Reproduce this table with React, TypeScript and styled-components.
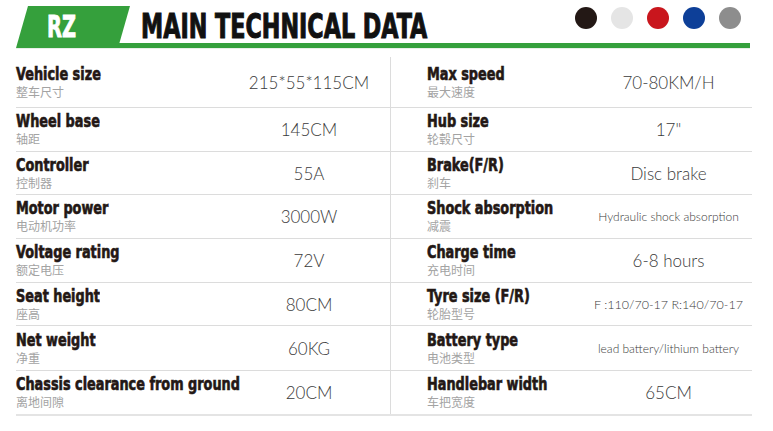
import React, { FC } from 'react';
import styled, { createGlobalStyle } from 'styled-components';

const GREEN = '#35a03c';
const INK = '#231815';
const LINE = '#dcdcdc';

const GlobalStyle = createGlobalStyle`
  html, body {
    margin: 0;
    padding: 0;
    background: #ffffff;
  }
  body {
    font-family: 'Lato', 'Noto Sans CJK SC', sans-serif;
  }
`;

const Page = styled.div`
  width: 773px;
  height: 431px;
  overflow: hidden;
  padding: 6px 21px 0 16px;
  box-sizing: border-box;
`;

const Header = styled.div`
  display: flex;
  align-items: stretch;
  height: 42px;
  margin-right: 2px;
  border-bottom: 1px solid #e8efe8;
`;

const Badge = styled.div`
  flex: 0 0 114px;
  background: ${GREEN};
  clip-path: polygon(12px 0, 100% 0, calc(100% - 12px) 100%, 0 100%);
  display: flex;
  align-items: center;
  padding-left: 31px;
  box-sizing: border-box;
`;

const Condensed = styled.span<{ $size: number; $scale: number; $color: string; $stroke?: number }>`
  display: inline-block;
  font-family: 'DejaVu Sans Condensed', 'DejaVu Sans', sans-serif;
  font-weight: 700;
  font-size: ${(p) => p.$size}px;
  line-height: 1;
  color: ${(p) => p.$color};
  white-space: nowrap;
  transform: scaleX(${(p) => p.$scale});
  transform-origin: left center;
  -webkit-text-stroke: ${(p) => p.$stroke ?? 0.6}px ${(p) => p.$color};
`;

const HeadMain = styled.div`
  flex: 1;
  margin-left: -12px;
  display: flex;
  flex-direction: column;
`;

const TitleRow = styled.div`
  flex: 1;
  display: flex;
  align-items: center;
  justify-content: space-between;
  padding: 0 9px 0 23px;
`;

const Title = styled.div`
  padding-top: 4px;
`;

const Swatches = styled.div`
  display: flex;
  gap: 14px;
  align-self: flex-start;
  margin-top: 1px;
`;

const Swatch = styled.span<{ $color: string }>`
  width: 22px;
  height: 22px;
  border-radius: 50%;
  background: ${(p) => p.$color};
`;

const Bar = styled.div`
  height: 6px;
  background: ${GREEN};
`;

const Table = styled.div`
  margin-top: 8px;
  border-bottom: 2px solid #e4e4e4;
  width: 736px;
`;

const Row = styled.div<{ $h: number }>`
  display: grid;
  grid-template-columns: 212px 163px 194px 167px;
  height: ${(p) => p.$h}px;
  box-sizing: border-box;
  border-bottom: 1px solid ${LINE};

  &:last-child {
    border-bottom: none;
  }
`;

const LabelCell = styled.div<{ $inset?: boolean }>`
  display: flex;
  flex-direction: column;
  justify-content: center;
  padding-left: ${(p) => (p.$inset ? 36 : 0)}px;
  min-width: 0;
`;

const SubLabel = styled.span`
  font-family: 'Noto Sans CJK SC', sans-serif;
  font-size: 12px;
  line-height: 14px;
  color: #a3a3a3;
  margin-top: 2px;
`;

const ValueCell = styled.div<{ $divider?: boolean; $size: number }>`
  display: flex;
  align-items: center;
  justify-content: center;
  font-family: 'Lato', sans-serif;
  font-weight: 300;
  font-size: ${(p) => p.$size}px;
  color: #3a3a3a;
  white-space: nowrap;
  border-right: ${(p) => (p.$divider ? `1px solid ${LINE}` : 'none')};
`;

type Spec = { en: string; zh: string; value: string; size?: number };

const rows: { h: number; left: Spec; right: Spec }[] = [
  {
    h: 51,
    left: { en: 'Vehicle size', zh: '整车尺寸', value: '215*55*115CM' },
    right: { en: 'Max speed', zh: '最大速度', value: '70-80KM/H' }
  },
  {
    h: 44,
    left: { en: 'Wheel base', zh: '轴距', value: '145CM' },
    right: { en: 'Hub size', zh: '轮毂尺寸', value: '17"' }
  },
  {
    h: 43,
    left: { en: 'Controller', zh: '控制器', value: '55A' },
    right: { en: 'Brake(F/R)', zh: '刹车', value: 'Disc brake' }
  },
  {
    h: 44,
    left: { en: 'Motor power', zh: '电动机功率', value: '3000W' },
    right: { en: 'Shock absorption', zh: '减震', value: 'Hydraulic shock absorption', size: 12 }
  },
  {
    h: 44,
    left: { en: 'Voltage rating', zh: '额定电压', value: '72V' },
    right: { en: 'Charge time', zh: '充电时间', value: '6-8 hours' }
  },
  {
    h: 43,
    left: { en: 'Seat height', zh: '座高', value: '80CM' },
    right: { en: 'Tyre size (F/R)', zh: '轮胎型号', value: 'F :110/70-17 R:140/70-17', size: 12.5 }
  },
  {
    h: 45,
    left: { en: 'Net weight', zh: '净重', value: '60KG' },
    right: { en: 'Battery type', zh: '电池类型', value: 'lead battery/lithium battery', size: 12 }
  },
  {
    h: 43,
    left: { en: 'Chassis clearance from ground', zh: '离地间隙', value: '20CM' },
    right: { en: 'Handlebar width', zh: '车把宽度', value: '65CM' }
  }
];

const swatches = ['#231815', '#e5e5e5', '#c9161d', '#0d3f98', '#8d8d8d'];

const Label: FC<{ spec: Spec; inset?: boolean }> = ({ spec, inset }) => (
  <LabelCell $inset={inset}>
    <Condensed $size={17} $scale={0.84} $color={INK}>
      {spec.en}
    </Condensed>
    <SubLabel>{spec.zh}</SubLabel>
  </LabelCell>
);

const App: FC = () => (
  <>
    <GlobalStyle />
    <Page>
      <Header>
        <Badge>
          <Condensed $size={30} $scale={0.72} $color="#ffffff" $stroke={0.8}>
            RZ
          </Condensed>
        </Badge>
        <HeadMain>
          <TitleRow>
            <Title>
              <Condensed $size={33} $scale={0.75} $color="#111111" $stroke={1}>
                MAIN TECHNICAL DATA
              </Condensed>
            </Title>
            <Swatches>
              {swatches.map((c) => (
                <Swatch key={c} $color={c} />
              ))}
            </Swatches>
          </TitleRow>
          <Bar />
        </HeadMain>
      </Header>
      <Table>
        {rows.map((r) => (
          <Row key={r.left.en} $h={r.h}>
            <Label spec={r.left} />
            <ValueCell $divider $size={r.left.size ?? 17}>
              {r.left.value}
            </ValueCell>
            <Label spec={r.right} inset />
            <ValueCell $size={r.right.size ?? 17}>{r.right.value}</ValueCell>
          </Row>
        ))}
      </Table>
    </Page>
  </>
);

export default App;
